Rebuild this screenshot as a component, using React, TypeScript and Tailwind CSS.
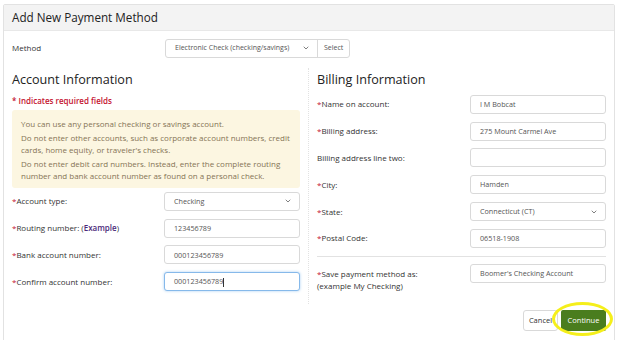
import { ChevronDown } from "lucide-react";

const font = { fontFamily: '"Open Sans", "Noto Sans", sans-serif' };

const Req = () => <span className="text-[#c41230]">*</span>;

const Field = ({
  label,
  value,
  required = true,
  select = false,
  focused = false,
}: {
  label: React.ReactNode;
  value: string;
  required?: boolean;
  select?: boolean;
  focused?: boolean;
}) => (
  <div className="flex items-center h-[26.8px]">
    <div className="flex-1 text-[8px] text-[#333]">
      {required && <Req />}
      {label}
    </div>
    <div
      className={`w-[136px] h-[19px] flex items-center justify-between pl-[9px] pr-[7px] rounded-[3px] bg-white text-[7.2px] text-[#555] border ${
        focused ? "border-[#86b9ea] shadow-[0_0_3px_#a9cff2]" : "border-[#d9d9d9]"
      }`}
    >
      <span>
        {value}
        {focused && <span className="inline-block w-px h-[9px] bg-[#333] align-middle" />}
      </span>
      {select && <ChevronDown size={8} strokeWidth={2.5} className="text-[#666]" />}
    </div>
  </div>
);

export default function App() {
  return (
    <div className="w-[624px] h-[340px] bg-white overflow-hidden pt-[4px] pl-[3px]" style={font}>
      <div className="w-[612px] h-[345px] border border-[#e2e2e2] rounded-[2px]">
        {/* Header */}
        <div className="h-[26px] bg-[#f3f3f3] border-b border-[#e8e8e8] flex items-center px-[8px]">
          <h1 className="text-[11.7px] text-[#222]">Add New Payment Method</h1>
        </div>

        <div className="px-[8px]">
          {/* Method row */}
          <div className="flex items-center h-[32px] mt-[1px]">
            <div className="w-[153px] text-[8px] text-[#333]">Method</div>
            <div className="flex h-[19px] border border-[#d9d9d9] rounded-[3px] text-[7px] text-[#555]">
              <div className="w-[152px] flex items-center justify-between pl-[9px] pr-[7px] border-r border-[#d9d9d9]">
                <span>Electronic Check (checking/savings)</span>
                <ChevronDown size={8} strokeWidth={2.5} className="text-[#666]" />
              </div>
              <div className="px-[6px] flex items-center">Select</div>
            </div>
          </div>

          <div className="flex">
            {/* Account information */}
            <div className="w-[288px] pt-[8px]">
              <h2 className="text-[12.6px] text-[#222] leading-[16px]">Account Information</h2>
              <p className="text-[8px] font-semibold text-[#c41230] mt-[7px] leading-[12px]">
                * Indicates required fields
              </p>
              <div className="mt-[3px] h-[78px] bg-[#fcf6e1] rounded-[3px] px-[9px] pt-[8px] text-[8px] leading-[12.2px] text-[#857455]">
                <p className="mb-[1.5px]">You can use any personal checking or savings account.</p>
                <p className="mb-[1.5px]">
                  Do not enter other accounts, such as corporate account numbers, credit cards, home equity, or
                  traveler's checks.
                </p>
                <p>
                  Do not enter debit card numbers. Instead, enter the complete routing number and bank account number
                  as found on a personal check.
                </p>
              </div>
              <div>
                <Field label="Account type:" value="Checking" select />
                <Field
                  label={
                    <>
                      Routing number: (<span className="text-[#4b2a7a] font-semibold">Example</span>)
                    </>
                  }
                  value="123456789"
                />
                <Field label="Bank account number:" value="000123456789" />
                <Field label="Confirm account number:" value="000123456789" focused />
              </div>
            </div>

            {/* Divider */}
            <div className="w-[17px] flex justify-center">
              <div className="mt-[4px] h-[236px] border-l border-dotted border-[#e2e2e2]" />
            </div>

            {/* Billing information */}
            <div className="flex-1 pt-[8px]">
              <h2 className="text-[12.6px] text-[#222] leading-[16px]">Billing Information</h2>
              <div className="mt-[3px]">
                <Field label="Name on account:" value="I M Bobcat" />
                <Field label="Billing address:" value="275 Mount Carmel Ave" />
                <Field label="Billing address line two:" value="" required={false} />
                <Field label="City:" value="Hamden" />
                <Field label="State:" value="Connecticut (CT)" select />
                <Field label="Postal Code:" value="06518-1908" />
              </div>
              <div className="border-t border-[#e2e2e2] mt-[4px] pt-[7px] h-[38px] flex items-start">
                <div className="flex-1 text-[8px] leading-[12px] text-[#333] pt-[4px]">
                  <Req />
                  Save payment method as:
                  <br />
                  (example My Checking)
                </div>
                <div className="w-[136px] h-[19px] flex items-center pl-[9px] rounded-[3px] border border-[#d9d9d9] text-[7.2px] text-[#555]">
                  Boomer's Checking Account
                </div>
              </div>
              <div className="flex justify-end items-center gap-[3px] mt-[16px]">
                <div className="h-[21px] w-[35px] flex items-center justify-center border border-[#d9d9d9] rounded-[3px] text-[7.5px] text-[#333]">
                  Cancel
                </div>
                <div className="relative">
                  <div className="h-[21px] w-[45px] flex items-center justify-center bg-[#4a7d1e] rounded-[2px] text-[7.5px] text-white">
                    Continue
                  </div>
                  <div className="absolute left-[-9px] top-[-8px] w-[61px] h-[34px] rounded-[50%] border-[3px] border-[#f5ef1a]" />
                </div>
              </div>
            </div>
          </div>
        </div>
      </div>
    </div>
  );
}
